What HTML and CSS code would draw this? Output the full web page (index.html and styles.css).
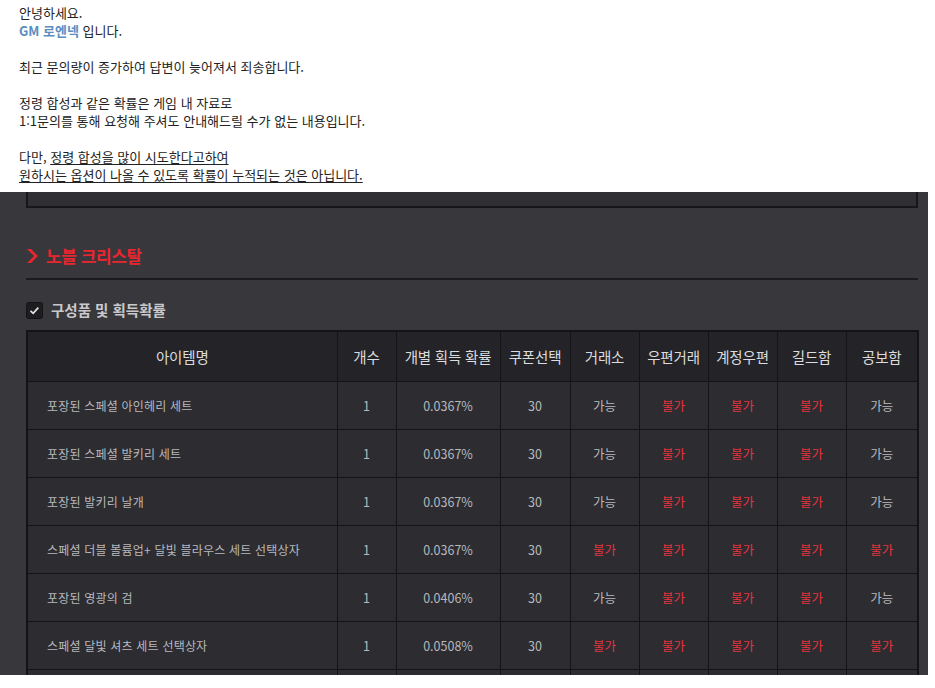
FILE: index.html
```html
<!DOCTYPE html>
<html lang="ko">

<head>
    <meta charset="UTF-8">
    <meta name="viewport" content="width=device-width, initial-scale=1.0">
    <title>노블 크리스탈 확률</title>
    <link rel="stylesheet" href="styles.css">
</head>

<body>
    <div class="notice">
        <p>안녕하세요.<br><span class="gm">GM 로엔넥</span> 입니다.</p>
        <p>최근 문의량이 증가하여 답변이 늦어져서 죄송합니다.</p>
        <p>정령 합성과 같은 확률은 게임 내 자료로<br>1:1문의를 통해 요청해 주셔도 안내해드릴 수가 없는 내용입니다.</p>
        <p>다만, <u>정령 합성을 많이 시도한다고하여<br>원하시는 옵션이 나올 수 있도록 확률이 누적되는 것은 아닙니다.</u></p>
    </div>

    <div class="page">
        <div class="panel"></div>

        <h2 class="title">
            <svg class="chevron" width="12" height="14" viewBox="0 0 12 14">
                <path d="M1 0 L5 0 L12 7 L5 14 L1 14 L8 7 Z" fill="#e8262f" />
            </svg>
            노블 크리스탈
        </h2>

        <div class="subtitle">
            <svg class="check" width="17" height="17" viewBox="0 0 17 17">
                <rect x="0.5" y="0.5" width="16" height="16" rx="2" fill="#1d1d20" stroke="#141416" />
                <path d="M4.5 8.8 L7.2 11.3 L12.3 5.6" fill="none" stroke="#e2e2e2" stroke-width="1.8" />
            </svg>
            구성품 및 획득확률
        </div>

        <table class="items">
            <colgroup>
                <col style="width: 310px">
                <col style="width: 59px">
                <col style="width: 104px">
                <col style="width: 70px">
                <col style="width: 69px">
                <col style="width: 69px">
                <col style="width: 69px">
                <col style="width: 69px">
                <col style="width: 72px">
            </colgroup>
            <thead>
                <tr>
                    <th>아이템명</th>
                    <th>개수</th>
                    <th>개별 획득 확률</th>
                    <th>쿠폰선택</th>
                    <th>거래소</th>
                    <th>우편거래</th>
                    <th>계정우편</th>
                    <th>길드함</th>
                    <th>공보함</th>
                </tr>
            </thead>
            <tbody>
                <tr>
                    <td class="name">포장된 스페셜 아인헤리 세트</td>
                    <td>1</td><td>0.0367%</td><td>30</td>
                    <td>가능</td><td class="no">불가</td><td class="no">불가</td><td class="no">불가</td><td>가능</td>
                </tr>
                <tr>
                    <td class="name">포장된 스페셜 발키리 세트</td>
                    <td>1</td><td>0.0367%</td><td>30</td>
                    <td>가능</td><td class="no">불가</td><td class="no">불가</td><td class="no">불가</td><td>가능</td>
                </tr>
                <tr>
                    <td class="name">포장된 발키리 날개</td>
                    <td>1</td><td>0.0367%</td><td>30</td>
                    <td>가능</td><td class="no">불가</td><td class="no">불가</td><td class="no">불가</td><td>가능</td>
                </tr>
                <tr>
                    <td class="name">스페셜 더블 볼륨업+ 달빛 블라우스 세트 선택상자</td>
                    <td>1</td><td>0.0367%</td><td>30</td>
                    <td class="no">불가</td><td class="no">불가</td><td class="no">불가</td><td class="no">불가</td><td class="no">불가</td>
                </tr>
                <tr>
                    <td class="name">포장된 영광의 검</td>
                    <td>1</td><td>0.0406%</td><td>30</td>
                    <td>가능</td><td class="no">불가</td><td class="no">불가</td><td class="no">불가</td><td>가능</td>
                </tr>
                <tr>
                    <td class="name">스페셜 달빛 셔츠 세트 선택상자</td>
                    <td>1</td><td>0.0508%</td><td>30</td>
                    <td class="no">불가</td><td class="no">불가</td><td class="no">불가</td><td class="no">불가</td><td class="no">불가</td>
                </tr>
                <tr>
                    <td class="name">&nbsp;</td>
                    <td></td><td></td><td></td><td></td><td></td><td></td><td></td><td></td>
                </tr>
            </tbody>
        </table>
    </div>
</body>

</html>
```

FILE: styles.css
```css
body {
    margin: 0;
    background: #fff;
    font-family: "Noto Sans CJK KR", "Noto Sans", sans-serif;
    height: 688px;
    overflow: hidden;
}

.notice {
    height: 192px;
    box-sizing: border-box;
    padding: 4px 0 0 19px;
    font-size: 13px;
    line-height: 18px;
    color: #222;
}

.notice p {
    margin: 0 0 18px;
}

.notice u {
    text-underline-offset: 2px;
}

.gm {
    color: #5b8dc2;
    font-weight: bold;
}

.page {
    width: 928px;
    height: 483px;
    overflow: hidden;
    background: #38373c;
    padding: 0 10px 0 26px;
    box-sizing: border-box;
}

.panel {
    height: 14px;
    background: #2f2f34;
    border: 2px solid #17171a;
    border-top: none;
}

.title {
    display: flex;
    align-items: center;
    gap: 8px;
    margin: 37px 0 0;
    padding-bottom: 11px;
    font-size: 17px;
    letter-spacing: -0.4px;
    line-height: 22px;
    font-weight: bold;
    color: #e8262f;
    border-bottom: 2px solid #1b1b1e;
}

.subtitle {
    display: flex;
    align-items: center;
    gap: 8px;
    margin-top: 20px;
    font-size: 14.5px;
    line-height: 20px;
    font-weight: bold;
    color: #c9c9cc;
}

.items {
    margin-top: 10px;
    width: 892px;
    border-collapse: collapse;
    table-layout: fixed;
    border: 2px solid #141416;
}

.items th,
.items td {
    border: 1px solid #141416;
    text-align: center;
    padding: 0;
}

.items th {
    height: 49px;
    background: #242428;
    color: #dcdcde;
    font-weight: normal;
    font-size: 14.5px;
    letter-spacing: -0.2px;
}

.items td {
    height: 47px;
    background: #2c2c31;
    color: #b9b9bc;
    font-size: 12.5px;
}

.items td.name {
    text-align: left;
    padding-left: 19px;
    font-size: 12px;
    letter-spacing: 0.2px;
}

.items td.no {
    color: #e6343d;
}
```
